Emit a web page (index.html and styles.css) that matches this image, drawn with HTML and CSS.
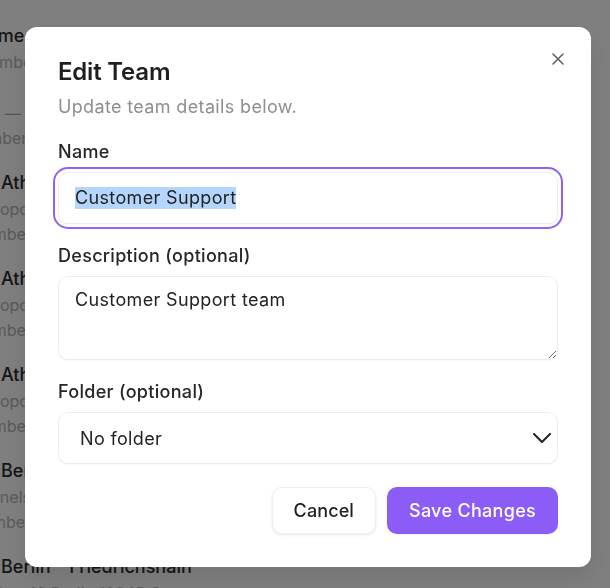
FILE: index.html
```html
<!DOCTYPE html>
<html>
<head>
<meta charset="UTF-8">
<meta name="viewport" content="width=device-width, initial-scale=1.0">
<title>Teams</title>
<link rel="stylesheet" href="styles.css">
</head>
<body>

<div class="team-list">
    <div class="team-row first">
        <div class="team-name cut-name">Name</div>
        <div class="team-meta cut-lg">12 members</div>
    </div>
    <div class="team-row">
        <div class="team-name blank">&nbsp;</div>
        <div class="team-meta dash">—</div>
        <div class="team-meta cut-md">4 members</div>
    </div>
    <div class="team-row">
        <div class="team-name">Athens – Glyfada</div>
        <div class="team-meta cut-sm">Propontidos 12, Glyfada</div>
        <div class="team-meta cut-lg">6 members</div>
    </div>
    <div class="team-row">
        <div class="team-name">Athens – Kifisia</div>
        <div class="team-meta cut-sm">Propontidos 4, Kifisia</div>
        <div class="team-meta cut-lg">9 members</div>
    </div>
    <div class="team-row">
        <div class="team-name">Athens – Piraeus</div>
        <div class="team-meta cut-sm">Propontidos 30, Piraeus</div>
        <div class="team-meta cut-lg">3 members</div>
    </div>
    <div class="team-row">
        <div class="team-name">Berlin – Mitte</div>
        <div class="team-meta cut-xs">Schnelstraße 8, Berlin 10115 Germany</div>
        <div class="team-meta cut-lg">7 members</div>
    </div>
    <div class="team-row">
        <div class="team-name">Berlin – Friedrichshain</div>
        <div class="team-meta cut-addr">Platz 10 Berlin 10245 Germany</div>
        <div class="team-meta cut-lg">5 members</div>
    </div>
</div>

<div class="overlay">
    <div class="modal">
        <button class="close-btn" aria-label="Close">
            <svg width="12" height="12" viewBox="0 0 12 12" fill="none" stroke="currentColor" stroke-width="1.5" stroke-linecap="round">
                <path d="M1 1L11 11M11 1L1 11"/>
            </svg>
        </button>

        <h2 class="modal-title">Edit Team</h2>
        <p class="modal-subtitle">Update team details below.</p>

        <div class="field first-field">
            <label class="field-label">Name</label>
            <div class="text-input focused"><span class="selected">Customer Support</span></div>
        </div>

        <div class="field">
            <label class="field-label">Description (optional)</label>
            <textarea class="text-area">Customer Support team</textarea>
        </div>

        <div class="field">
            <label class="field-label">Folder (optional)</label>
            <div class="select-wrap">
                <select class="select-input">
                    <option>No folder</option>
                </select>
                <svg class="chevron" width="18" height="10" viewBox="0 0 18 10" fill="none" stroke="currentColor" stroke-width="2" stroke-linecap="round" stroke-linejoin="round">
                    <path d="M1 1L9 9L17 1"/>
                </svg>
            </div>
        </div>

        <div class="modal-actions">
            <button class="btn btn-cancel">Cancel</button>
            <button class="btn btn-save">Save Changes</button>
        </div>
    </div>
</div>

</body>
</html>
```

FILE: styles.css
```css
body, html {
    margin: 0;
    padding: 0;
    background-color: #fff;
    font-family: Inter, "Noto Sans", sans-serif;
    height: 100%;
    overflow: hidden;
}

/* list of teams sitting behind the dialog */
.team-list {
    display: flex;
    flex-direction: column;
    padding-top: 24px;
    padding-left: 1px;
}

.team-row {
    display: flex;
    flex-direction: column;
    gap: 3px;
    height: 96px;
}

.team-row.first {
    height: 51px;
}

.team-name {
    font-size: 18px;
    font-weight: 500;
    line-height: 24px;
    color: #2c2c2c;
    white-space: nowrap;
}

.team-meta {
    font-size: 16px;
    line-height: 22px;
    color: #b4b4b4;
    white-space: nowrap;
}

.team-meta.dash {
    color: #a8a8a8;
    padding-left: 4px;
}

.cut-name { margin-left: -27px; }
.cut-xs { margin-left: -30px; }
.cut-sm { margin-left: -17px; }
.cut-md { margin-left: -51px; }
.cut-lg { margin-left: -46px; }
.cut-addr { margin-left: -13px; }

/* dim layer + dialog */
.overlay {
    position: fixed;
    inset: 0;
    background-color: rgba(0, 0, 0, 0.5);
    display: flex;
    justify-content: center;
    align-items: center;
    padding: 6px 0 0 6px;
}

.modal {
    position: relative;
    width: 566px;
    box-sizing: border-box;
    background-color: #fff;
    border-radius: 12px;
    padding: 29px 33px 33px 33px;
    box-shadow: 0 10px 25px rgba(0, 0, 0, 0.1);
}

.close-btn {
    position: absolute;
    top: 26px;
    right: 27px;
    width: 12px;
    height: 12px;
    padding: 0;
    border: none;
    background: none;
    color: #5c5c5c;
    display: flex;
}

.modal-title {
    margin: 0;
    font-size: 24px;
    font-weight: 600;
    line-height: 32px;
    letter-spacing: -0.2px;
    color: #1f1f1f;
}

.modal-subtitle {
    margin: 5px 0 0 0;
    font-size: 18px;
    line-height: 28px;
    letter-spacing: 0.35px;
    color: #8e8e8e;
}

.field {
    display: flex;
    flex-direction: column;
    gap: 6px;
    margin-top: 18px;
}

.field.first-field {
    margin-top: 17px;
}

.field-label {
    font-size: 18px;
    font-weight: 500;
    line-height: 28px;
    letter-spacing: 0.3px;
    color: #262626;
}

.text-input,
.text-area,
.select-input {
    box-sizing: border-box;
    width: 100%;
    border: 1px solid #ededed;
    border-radius: 10px;
    background-color: #fff;
    font-family: Inter, "Noto Sans", sans-serif;
    font-size: 18px;
    letter-spacing: 0.35px;
    color: #222;
    box-shadow: 0 1px 2px rgba(0, 0, 0, 0.03);
}

.text-input {
    height: 52px;
    padding: 0 16px;
    display: flex;
    align-items: center;
}

.text-input.focused {
    outline: 2px solid #8f62f7;
    outline-offset: 3px;
}

.selected {
    background-color: #b4d6fd;
    line-height: 22px;
}

.text-area {
    height: 84px;
    padding: 9px 16px;
    line-height: 28px;
    resize: vertical;
    outline: none;
}

.select-wrap {
    position: relative;
}

.select-input {
    appearance: none;
    height: 52px;
    padding: 0 40px 0 21px;
    outline: none;
}

.chevron {
    position: absolute;
    right: 7px;
    top: 21px;
    color: #222;
}

.modal-actions {
    display: flex;
    justify-content: flex-end;
    gap: 11px;
    margin-top: 23px;
}

.btn {
    height: 47px;
    padding: 0 22px;
    border-radius: 10px;
    font-family: Inter, "Noto Sans", sans-serif;
    font-size: 18px;
    font-weight: 500;
    letter-spacing: 0.3px;
    cursor: pointer;
}

.btn-cancel {
    padding: 0 21px;
    letter-spacing: 0.1px;
    background-color: #fff;
    color: #222;
    border: 1px solid #efefef;
    box-shadow: 0 1px 3px rgba(0, 0, 0, 0.1);
}

.btn-save {
    background-color: #8b5cf6;
    color: #fff;
    border: none;
    box-shadow: 0 1px 2px rgba(0, 0, 0, 0.06);
}
```
